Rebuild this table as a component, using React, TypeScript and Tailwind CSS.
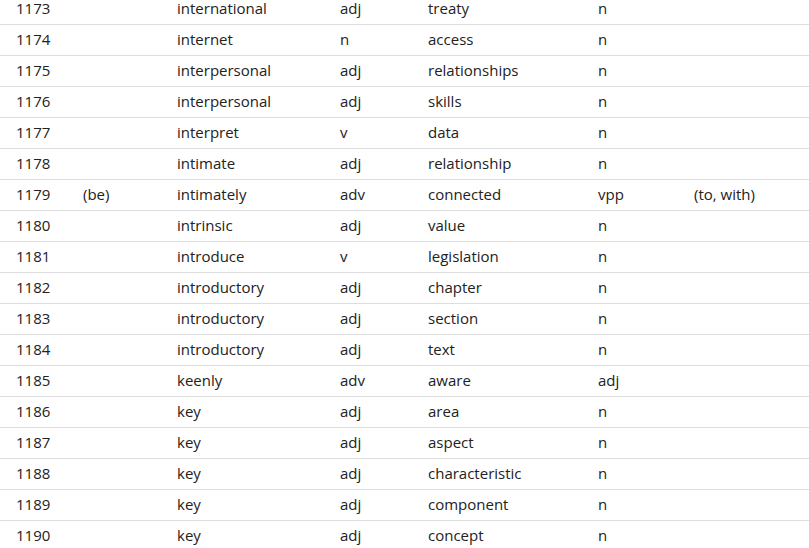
import React from "react";

const rows: [string, string, string, string, string, string, string][] = [
  ["1173", "", "international", "adj", "treaty", "n", ""],
  ["1174", "", "internet", "n", "access", "n", ""],
  ["1175", "", "interpersonal", "adj", "relationships", "n", ""],
  ["1176", "", "interpersonal", "adj", "skills", "n", ""],
  ["1177", "", "interpret", "v", "data", "n", ""],
  ["1178", "", "intimate", "adj", "relationship", "n", ""],
  ["1179", "(be)", "intimately", "adv", "connected", "vpp", "(to, with)"],
  ["1180", "", "intrinsic", "adj", "value", "n", ""],
  ["1181", "", "introduce", "v", "legislation", "n", ""],
  ["1182", "", "introductory", "adj", "chapter", "n", ""],
  ["1183", "", "introductory", "adj", "section", "n", ""],
  ["1184", "", "introductory", "adj", "text", "n", ""],
  ["1185", "", "keenly", "adv", "aware", "adj", ""],
  ["1186", "", "key", "adj", "area", "n", ""],
  ["1187", "", "key", "adj", "aspect", "n", ""],
  ["1188", "", "key", "adj", "characteristic", "n", ""],
  ["1189", "", "key", "adj", "component", "n", ""],
  ["1190", "", "key", "adj", "concept", "n", ""],
];

export default function App() {
  return (
    <div
      className="w-[809px] h-[548px] overflow-hidden bg-white text-[#222] text-[15px]"
      style={{ fontFamily: '"Open Sans", "Noto Sans", sans-serif' }}
    >
      <div className="-mt-[6px]">
        {rows.map((r) => (
          <div
            key={r[0]}
            className="grid grid-cols-[83px_94px_163px_88px_170px_96px_1fr] h-[31px] pb-[1px] items-center border-b border-[#dedede] leading-none"
          >
            <div className="pl-[16px]">{r[0]}</div>
            <div>{r[1]}</div>
            <div>{r[2]}</div>
            <div>{r[3]}</div>
            <div>{r[4]}</div>
            <div>{r[5]}</div>
            <div>{r[6]}</div>
          </div>
        ))}
      </div>
    </div>
  );
}
